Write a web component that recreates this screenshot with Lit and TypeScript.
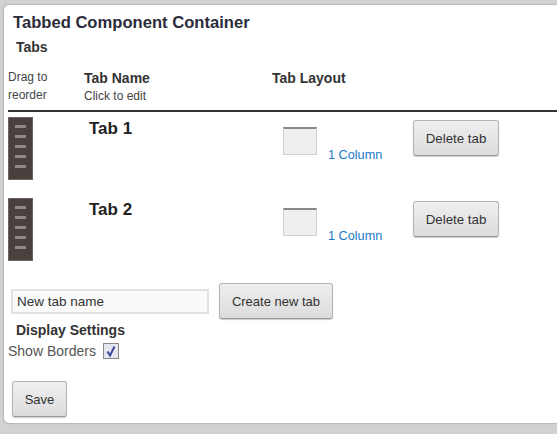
import { LitElement, html, css } from "lit";
import { customElement } from "lit/decorators.js";

@customElement("app-root")
export class AppRoot extends LitElement {
  static styles = css`
    :host { display: block; width: 557px; height: 434px; overflow: hidden; background: #d2d2d2; font-family: "Liberation Sans", Arial, sans-serif; color: #333; box-sizing: border-box; padding: 5px 0 11px 4px; }
    .card { height: 418px; background: #fff; border-radius: 5px 0 0 5px; box-shadow: 0 0 2px #777; padding: 9px 0 0 4px; box-sizing: border-box; display: flex; flex-direction: column; }
    h1 { margin: 0 0 0 5px; font-size: 16.6px; line-height: 18px; font-weight: bold; color: #2c2c3a; }
    h2 { margin: 0 0 0 8px; font-size: 14px; line-height: 15px; font-weight: bold; color: #333; }
    .tabs-title { margin-top: 8px; }
    .grid { display: grid; grid-template-columns: 76px 188px 1fr; }
    .head { margin-top: 14px; height: 41px; border-bottom: 2px solid #333; }
    .small { font-size: 12px; line-height: 18px; color: #444; }
    .h-col { font-size: 14px; line-height: 18px; font-weight: bold; color: #333; }
    .h-drag { margin-top: -1px; }
    .row { height: 81px; }
    .rows { margin-top: 5px; }
    .handle { width: 25px; height: 63px; background: #4a403e; box-sizing: border-box; padding-top: 7px; display: flex; flex-direction: column; align-items: center; gap: 7px; border: 1px solid #6b6462; }
    .handle i { width: 11px; height: 3px; background: #8f8987; }
    .tab-name { font-size: 17px; font-weight: bold; line-height: 20px; color: #222; padding: 2px 0 0 5px; }
    .layout-cell { display: flex; padding-left: 11px; gap: 11px; align-items: flex-start; }
    .thumb { width: 34px; height: 28px; margin-top: 10px; box-sizing: border-box; background: #efefef; border: 1px solid #d0d0d0; border-top: 2px solid #8a8a8a; }
    .link { margin-top: 31px; width: 74px; flex: none; font-size: 12.7px; line-height: 15px; color: #1a78c9; text-decoration: none; }
    button { font: 13px "Liberation Sans", Arial, sans-serif; color: #333; background: linear-gradient(#efefef, #dcdcdc); border: 1px solid #b4b4b4; border-bottom-color: #999; border-radius: 3px; box-shadow: 0 1px 1px #ccc; padding: 0; height: 36px; }
    .del { width: 86px; margin-top: 3px; font-size: 13.3px; }
    .create { display: flex; align-items: flex-start; gap: 10px; margin: 4px 0 0 3px; }
    .field { width: 198px; height: 25px; margin-top: 6px; box-sizing: border-box; background: #fafafa; border: 2px solid #e2e2e2; font: 13.5px "Liberation Sans", Arial, sans-serif; color: #333; padding: 0 4px; outline: none; }
    .field::placeholder { color: #333; opacity: 1; }
    .create button { width: 114px; }
    .settings { margin-top: 4px; }
    .show { display: flex; align-items: center; gap: 7px; font-size: 14px; line-height: 18px; color: #555; margin-top: 4px; }
    .check { width: 16px; height: 16px; box-sizing: border-box; border: 1px solid #888; background: #e6e6ee; display: flex; }
    .save { width: 55px; margin: 21px 0 0 4px; align-self: flex-start; }
  `;

  private row(name: string) {
    return html`<div class="grid row">
      <div class="handle"><i></i><i></i><i></i><i></i><i></i></div>
      <div class="tab-name">${name}</div>
      <div class="layout-cell">
        <div class="thumb"></div>
        <a class="link" href="#">1 Column</a>
        <button class="del">Delete tab</button>
      </div>
    </div>`;
  }

  render() {
    return html`<div class="card">
      <h1>Tabbed Component Container</h1>
      <h2 class="tabs-title">Tabs</h2>
      <div class="grid head">
        <div class="small h-drag">Drag to<br />reorder</div>
        <div><div class="h-col">Tab Name</div><div class="small">Click to edit</div></div>
        <div class="h-col">Tab Layout</div>
      </div>
      <div class="rows">${this.row("Tab 1")}${this.row("Tab 2")}</div>
      <div class="create">
        <input class="field" placeholder="New tab name" />
        <button>Create new tab</button>
      </div>
      <h2 class="settings">Display Settings</h2>
      <div class="show">Show Borders
        <span class="check"><svg width="14" height="14" viewBox="0 0 14 14"><path d="M3.5 7.5 L6 11.5 L10.5 2.5" fill="none" stroke="#3a4ba0" stroke-width="2"/></svg></span>
      </div>
      <button class="save">Save</button>
    </div>`;
  }
}
